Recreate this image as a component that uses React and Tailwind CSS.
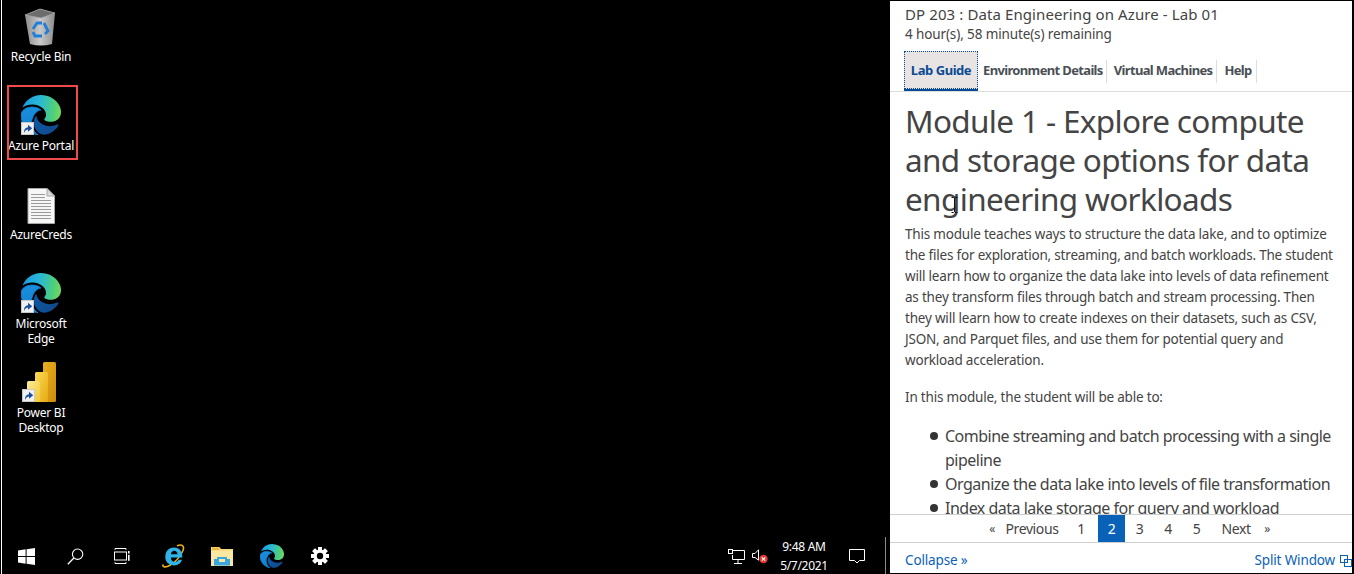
import React from "react";

const EDGE_A = "M21.86 17.86q.14 0 .25.12.1.13.1.25t-.11.33l-.32.46-.43.53-.44.5q-.21.25-.38.42l-.22.23q-.58.53-1.34 1.04-.76.51-1.6.91-.86.4-1.74.64t-1.67.24q-.9 0-1.69-.28-.8-.28-1.48-.78-.68-.5-1.22-1.17-.53-.66-.92-1.44-.38-.77-.58-1.6-.2-.83-.2-1.67 0-1 .32-1.96.33-.97.87-1.8.14.95.55 1.77.41.82 1.02 1.5.6.68 1.38 1.21.78.54 1.64.9.86.36 1.77.56.92.2 1.8.2 1.12 0 2.18-.24 1.06-.23 2.06-.72l.2-.1.2-.05z";
const EDGE_B = "M6.36 16.59q0 1.1.27 2.15.27 1.06.78 2.03.51.96 1.24 1.77.74.82 1.66 1.4-1.47-.2-2.8-.74-1.33-.55-2.48-1.37-1.15-.83-2.08-1.9-.92-1.07-1.58-2.33T.36 14.94Q0 13.54 0 12.06q0-.81.32-1.49.31-.68.83-1.23.53-.55 1.2-.96.66-.4 1.35-.66.74-.27 1.5-.39.78-.12 1.55-.12.7 0 1.42.1.72.12 1.4.35.68.23 1.32.57.63.35 1.16.83-.35 0-.7.07-.33.07-.65.23v-.02q-.63.28-1.2.74-.57.46-1.05 1.04-.48.58-.87 1.26-.38.67-.65 1.39-.27.71-.42 1.44-.15.72-.15 1.38z";
const EDGE_C = "M11.96.06q1.7 0 3.33.39 1.63.38 3.07 1.15 1.43.77 2.62 1.93 1.18 1.16 1.98 2.7.49.94.76 1.96.28 1 .28 2.08 0 .89-.23 1.7-.24.8-.69 1.48-.45.68-1.1 1.22-.64.53-1.45.88-.54.24-1.11.36-.58.13-1.16.13-.42 0-.97-.03-.54-.03-1.1-.12-.55-.1-1.05-.28-.5-.19-.84-.5-.12-.09-.23-.24-.1-.16-.1-.33 0-.15.16-.35.16-.2.35-.5.2-.28.36-.68.16-.4.16-.95 0-1.06-.4-1.96-.4-.91-1.06-1.64-.66-.74-1.52-1.28-.86-.55-1.79-.89-.84-.3-1.72-.44-.87-.14-1.76-.14-1.55 0-3.06.45T.94 7.55q.71-1.74 1.81-3.13 1.1-1.38 2.52-2.35Q6.68 1.1 8.37.58q1.7-.52 3.58-.52Z";

function Edge({ size, id }) {
  return (
    <svg width={size} height={size} viewBox="0 0 24 24" className="block">
      <defs>
        <linearGradient id={id + "c"} x1="0" y1="0.5" x2="1" y2="0.6">
          <stop offset="0" stopColor="#1b9de2" />
          <stop offset="0.45" stopColor="#2bb9d2" />
          <stop offset="0.8" stopColor="#4fcf7a" />
          <stop offset="1" stopColor="#74d95c" />
        </linearGradient>
        <linearGradient id={id + "b"} x1="0.5" y1="0" x2="0.6" y2="1">
          <stop offset="0" stopColor="#1a8fdc" />
          <stop offset="1" stopColor="#0e7fd0" />
        </linearGradient>
        <linearGradient id={id + "a"} x1="0" y1="0" x2="1" y2="0.4">
          <stop offset="0" stopColor="#0c59a4" />
          <stop offset="1" stopColor="#114a8b" />
        </linearGradient>
      </defs>
      <path d={EDGE_B} fill={`url(#${id}b)`} stroke="#0f84d4" strokeWidth="0.5" />
      <path d={EDGE_A} fill={`url(#${id}a)`} stroke="#0f5aa6" strokeWidth="0.5" />
      <path d={EDGE_C} fill={`url(#${id}c)`} />
    </svg>
  );
}

function Shortcut() {
  return (
    <svg width="13" height="13" viewBox="0 0 13 13" className="absolute left-0 bottom-0">
      <rect width="13" height="13" fill="#f0f0f0" />
      <rect x="0.5" y="0.5" width="12" height="12" fill="none" stroke="#c8c8c8" />
      <path d="M3 11 C3 7 4.5 5.5 7 5.2 V2.8 L11.2 6.3 7 9.8 V7.6 C5.5 7.6 4.4 8.6 3 11Z" fill="#1a4fa0" />
    </svg>
  );
}

function RecycleIcon() {
  return (
    <svg width="34" height="38" viewBox="0 0 34 38" className="block">
      <defs>
        <linearGradient id="rb" x1="0" y1="0" x2="1" y2="0">
          <stop offset="0" stopColor="#8d8d8d" />
          <stop offset="0.5" stopColor="#c9c9c9" />
          <stop offset="1" stopColor="#8c8c8c" />
        </linearGradient>
      </defs>
      <path d="M1 7 L16 1 L31 5 L28 36 Q17 39 6 36 Z" fill="url(#rb)" />
      <path d="M1 7 L16 1 L31 5 L17 10 Z" fill="#6c6c6c" stroke="#a9a9a9" strokeWidth="0.7" />
      <g fill="none" stroke="#1f7fd8" strokeWidth="2.8">
        <path d="M9 21 L13 15 L18 15" />
        <path d="M20 15 L24 23 L21 26" />
        <path d="M18 28 L11 28 L9 24" />
      </g>
    </svg>
  );
}

function DocIcon() {
  return (
    <svg width="28" height="36" viewBox="0 0 28 36" className="block">
      <path d="M1 0.5 H20 L27.5 8 V35.5 H1 Z" fill="#f6f6f6" stroke="#a8a8a8" />
      <path d="M20 0.5 V8 H27.5 Z" fill="#d8d8d8" stroke="#a8a8a8" />
      <g stroke="#9a9a9a" strokeWidth="1">
        <path d="M4 6.5H18M4 9.5H18M4 12.5H24M4 15.5H24M4 18.5H24M4 21.5H24M4 24.5H24M4 27.5H24M4 30.5H24" />
      </g>
    </svg>
  );
}

function PowerBI() {
  return (
    <svg width="34" height="40" viewBox="0 0 34 40" className="block">
      <defs>
        <linearGradient id="p1" x1="0" y1="0" x2="1" y2="1">
          <stop offset="0" stopColor="#e8b21e" />
          <stop offset="1" stopColor="#cf8a0c" />
        </linearGradient>
        <linearGradient id="p2" x1="0" y1="0" x2="1" y2="1">
          <stop offset="0" stopColor="#fbdb55" />
          <stop offset="1" stopColor="#e6a912" />
        </linearGradient>
        <linearGradient id="p3" x1="0" y1="0" x2="1" y2="1">
          <stop offset="0" stopColor="#fdeb9a" />
          <stop offset="1" stopColor="#f2c62f" />
        </linearGradient>
      </defs>
      <rect x="21" y="0" width="13" height="40" rx="1.5" fill="url(#p1)" />
      <rect x="13" y="10" width="13" height="30" rx="1.5" fill="url(#p2)" />
      <rect x="5" y="19" width="13" height="21" rx="1.5" fill="url(#p3)" />
    </svg>
  );
}

function DesktopItem({ icon, lines }) {
  return (
    <div className="relative flex h-[89px] w-[76px] flex-col items-center text-[12px] leading-[15px] text-white">
      <div className="relative flex h-[45px] w-[40px] items-end justify-center">{icon}</div>
      <div className="mt-[3px] whitespace-nowrap text-center tracking-[-0.25px]">
        {lines.map((l) => (
          <div key={l}>{l}</div>
        ))}
      </div>
    </div>
  );
}

function WinLogo() {
  return (
    <svg width="17" height="17" viewBox="0 0 17 17" className="block">
      <path d="M0 2.4 7.6 1.3V8H0ZM8.6 1.2 17 0V8H8.6ZM0 9H7.6V15.7L0 14.6ZM8.6 9H17V17L8.6 15.8Z" fill="#fff" />
    </svg>
  );
}
function SearchI() {
  return (
    <svg width="17" height="17" viewBox="0 0 17 17" className="block" fill="none" stroke="#fff" strokeWidth="1.1">
      <circle cx="10.6" cy="6.2" r="5.2" />
      <path d="M6.9 10 0.8 16.2" strokeWidth="1.3" />
    </svg>
  );
}
function TaskView() {
  return (
    <svg width="16" height="16" viewBox="0 0 16 16" className="block" fill="none" stroke="#fff" strokeWidth="1">
      <path d="M1 .5H12M1 15.5H12M1 .5V1.8M12 .5V1.8M1 15.5V14.2M12 15.5V14.2" />
      <rect x="0.5" y="4" width="12" height="8" />
      <rect x="14" y="3" width="1.6" height="2.5" fill="#fff" stroke="none" />
      <rect x="14" y="6.8" width="1.6" height="6" fill="#fff" stroke="none" />
    </svg>
  );
}
function IE() {
  return (
    <svg width="24" height="26" viewBox="0 0 24 26" className="block">
      <path d="M2.4 21.5 C0.5 24.5 5 24.6 9 22.2 C14.5 19 19.5 13 22 7.5 C23.5 3.5 21.5 0.5 16 2.8" fill="none" stroke="#eab018" strokeWidth="1.6" />
      <path d="M4.3 13.5 C4.5 7.5 8.6 4.5 13 4.5 C18.5 4.5 21.5 8.5 21.3 14.5 H9.8 C10 17.5 12 19 14 19 C15.8 19 17 18 17.7 16.8 H21 C19.8 20.4 17 22.5 13.3 22.5 C8 22.5 4.1 19 4.3 13.5Z M9.9 11.2 H16.6 C16.4 9 15 7.8 13.3 7.8 C11.5 7.8 10.2 9 9.9 11.2Z" fill="#2fb4ea" fillRule="evenodd" />
    </svg>
  );
}
function Folder() {
  return (
    <svg width="22" height="20" viewBox="0 0 22 20" className="block">
      <path d="M0 1 H8.5 L10 3 H22 V20 H0Z" fill="#f6dc85" />
      <rect x="0" y="5" width="22" height="15" fill="#fbe6a2" />
      <rect x="1" y="1.5" width="7.5" height="2.5" fill="#e9b93f" />
      <path d="M6 11 H16 V13 H19 V19.5 H3 V13 H6Z" fill="#3aa6de" />
      <rect x="8" y="13" width="6" height="3" fill="#fbe6a2" />
    </svg>
  );
}
function Gear() {
  const teeth = [0, 45, 90, 135, 180, 225, 270, 315];
  return (
    <svg width="18" height="18" viewBox="0 0 18 18" className="block">
      {teeth.map((a) => (
        <rect key={a} x="7" y="0" width="4" height="18" rx="0.6" fill="#fff" transform={`rotate(${a} 9 9)`} />
      ))}
      <circle cx="9" cy="9" r="6.4" fill="#fff" />
      <circle cx="9" cy="9" r="3.2" fill="#000" />
    </svg>
  );
}
function Network() {
  return (
    <svg width="17" height="15" viewBox="0 0 17 15" className="block" fill="none" stroke="#fff" strokeWidth="1">
      <path d="M5 1.5H16.5V10.5H4.5V6" />
      <rect x="0.5" y="0.5" width="4" height="4" fill="#000" />
      <path d="M10 10.5V14M6 14.5H14" />
    </svg>
  );
}
function Speaker() {
  return (
    <svg width="17" height="15" viewBox="0 0 17 15" className="block">
      <path d="M0.5 4.5H3L6.5 0.8V11.2L3 8.5H0.5Z" fill="none" stroke="#fff" />
      <circle cx="11.5" cy="10" r="4.2" fill="#e53935" />
      <path d="M9.8 8.3 13.2 11.7M13.2 8.3 9.8 11.7" stroke="#fff" strokeWidth="1.1" />
    </svg>
  );
}
function Bubble() {
  return (
    <svg width="16" height="15" viewBox="0 0 16 15" className="block" fill="none" stroke="#fff" strokeWidth="1">
      <path d="M0.5 0.5H15.5V11.5H10.5L8 14 5.5 11.5H0.5Z" />
    </svg>
  );
}
function SplitIcon() {
  return (
    <svg width="12" height="12" viewBox="0 0 12 12" className="ml-[5px] block" fill="none" stroke="#0a62b8" strokeWidth="1">
      <rect x="0.5" y="0.5" width="7" height="7" />
      <rect x="4.5" y="4.5" width="7" height="7" />
    </svg>
  );
}
function IBeam() {
  return (
    <svg width="7" height="16" viewBox="0 0 7 16" className="absolute left-[61px] top-[105px]" fill="none" stroke="#111" strokeWidth="1">
      <path d="M0.5 0.5H2.5L3.5 1.5 4.5 0.5H6.5M3.5 1.5V14.5M0.5 15.5H2.5L3.5 14.5 4.5 15.5H6.5" />
    </svg>
  );
}

const sans = { fontFamily: '"Noto Sans", "Open Sans", sans-serif' };

function Tab({ children, className = "" }) {
  return (
    <div className="flex h-[40px] items-center">
      <div className={"flex h-[23px] items-center whitespace-nowrap border-r border-[#dddddd] text-[13px] font-bold tracking-[-0.65px] text-[#4a4f55] " + className}>
        {children}
      </div>
    </div>
  );
}

function PageLink({ children, active, className = "" }) {
  return (
    <div className={"flex h-full items-center justify-center " + (active ? "bg-[#0a62b8] text-white " : "text-[#444] ") + className}>
      {children}
    </div>
  );
}

function Bullet({ children }) {
  return (
    <li className="flex">
      <span className="mt-[8px] mr-[7px] h-[8px] w-[8px] shrink-0 rounded-full bg-[#333]" />
      <span>{children}</span>
    </li>
  );
}

export default function App() {
  return (
    <div className="flex h-[574px] w-[1354px] overflow-hidden bg-black" style={sans}>
      {/* Desktop */}
      <div className="ml-px flex h-full w-[889px] flex-col border-l border-white">
        <div className="relative flex-1 pl-[1px] pt-[1px]">
          <DesktopItem icon={<RecycleIcon />} lines={["Recycle Bin"]} />
          <DesktopItem icon={<div className="relative"><Edge size={40} id="e1" /><Shortcut /></div>} lines={["Azure Portal"]} />
          <DesktopItem icon={<DocIcon />} lines={["AzureCreds"]} />
          <DesktopItem icon={<div className="relative"><Edge size={40} id="e2" /><Shortcut /></div>} lines={["Microsoft", "Edge"]} />
          <DesktopItem icon={<div className="relative mr-[4px]"><PowerBI /><Shortcut /></div>} lines={["Power BI", "Desktop"]} />
          <div className="absolute left-[5px] top-[85px] h-[75px] w-[71px] border-2 border-[#f04a4a]" />
        </div>
        <div className="flex h-[36px] items-center">
          <div className="flex w-[48px] justify-center"><WinLogo /></div>
          <div className="flex w-[50px] justify-center"><SearchI /></div>
          <div className="flex w-[44px] justify-center"><TaskView /></div>
          <div className="flex w-[58px] justify-center"><IE /></div>
          <div className="flex w-[40px] justify-center"><Folder /></div>
          <div className="flex w-[60px] justify-center"><Edge size={24} id="e3" /></div>
          <div className="flex w-[36px] justify-center"><Gear /></div>
          <div className="flex-1" />
          <div className="flex w-[24px] justify-center"><Network /></div>
          <div className="flex w-[24px] justify-center"><Speaker /></div>
          <div className="w-[64px] text-center text-[12px] leading-[19px] tracking-[-0.3px] text-white">
            <div>9:48 AM</div>
            <div>5/7/2021</div>
          </div>
          <div className="ml-[6px] flex w-[30px] justify-center"><Bubble /></div>
          <div className="ml-[13px] mr-[4px] h-[38px] w-px bg-[#8a8a8a]" />
        </div>
      </div>
      {/* Lab panel */}
      <div className="my-px flex h-[572px] w-[462px] flex-col bg-white text-[#444]">
        <div className="px-[15px] pt-[2px]">
          <div className="text-[15px] leading-[22px] tracking-[0.1px]">DP 203 : Data Engineering on Azure - Lab 01</div>
          <div className="text-[13.5px] leading-[18px] tracking-[-0.12px]">4 hour(s), 58 minute(s) remaining</div>
        </div>
        <div className="mt-[8px] flex h-[41px] border-b border-[#dddddd] pl-[14px]">
          <div className="h-[40px] w-[74px] border-b-2 border-[#0b4a94]">
            <div className="flex h-[38px] items-center justify-center border border-dotted border-[#0b4a94] bg-[#e8e4e4] pt-[1px] text-[13px] font-bold tracking-[-0.45px] text-[#0b4a94]">Lab Guide</div>
          </div>
          <Tab className="pl-[5px] pr-[3px]">Environment Details</Tab>
          <Tab className="pl-[7px] pr-[4px]">Virtual Machines</Tab>
          <Tab className="pl-[7px] pr-[4px]">Help</Tab>
        </div>
        <div className="relative flex-1 overflow-hidden px-[15px] pt-[9px]">
          <h1 className="text-[31.5px] leading-[39px] tracking-[-0.65px]">Module 1 - Explore compute and storage options for data engineering workloads</h1>
          <p className="mt-[6px] text-[13.5px] leading-[21px] tracking-[-0.2px]">This module teaches ways to structure the data lake, and to optimize the files for exploration, streaming, and batch workloads. The student will learn how to organize the data lake into levels of data refinement as they transform files through batch and stream processing. Then they will learn how to create indexes on their datasets, such as CSV, JSON, and Parquet files, and use them for potential query and workload acceleration.</p>
          <p className="mt-[16px] text-[13.5px] leading-[21px] tracking-[-0.2px]">In this module, the student will be able to:</p>
          <ul className="mt-[16px] pl-[25px] text-[16px] leading-[24px] tracking-[-0.5px]">
            <Bullet>Combine streaming and batch processing with a single pipeline</Bullet>
            <Bullet>Organize the data lake into levels of file transformation</Bullet>
            <Bullet>Index data lake storage for query and workload acceleration</Bullet>
          </ul>
          <IBeam />
        </div>
        <div className="flex h-[29px] shrink-0 items-center border-y border-[#cfcfcf] pl-[94px] text-[14px] tracking-[-0.4px]">
          <PageLink className="w-[16px] text-[12px]">«</PageLink>
          <PageLink className="w-[64px]">Previous</PageLink>
          <PageLink className="w-[34px]">1</PageLink>
          <PageLink active className="w-[27px]">2</PageLink>
          <PageLink className="w-[29px]">3</PageLink>
          <PageLink className="w-[28px]">4</PageLink>
          <PageLink className="w-[29px]">5</PageLink>
          <PageLink className="w-[50px]">Next</PageLink>
          <PageLink className="w-[12px] text-[12px]">»</PageLink>
        </div>
        <div className="flex h-[30px] shrink-0 items-center justify-between pl-[15px] pt-[5px] text-[13.5px] tracking-[-0.15px] text-[#0a62b8]">
          <div>Collapse »</div>
          <div className="flex items-center">Split Window<SplitIcon /></div>
        </div>
      </div>
    </div>
  );
}
